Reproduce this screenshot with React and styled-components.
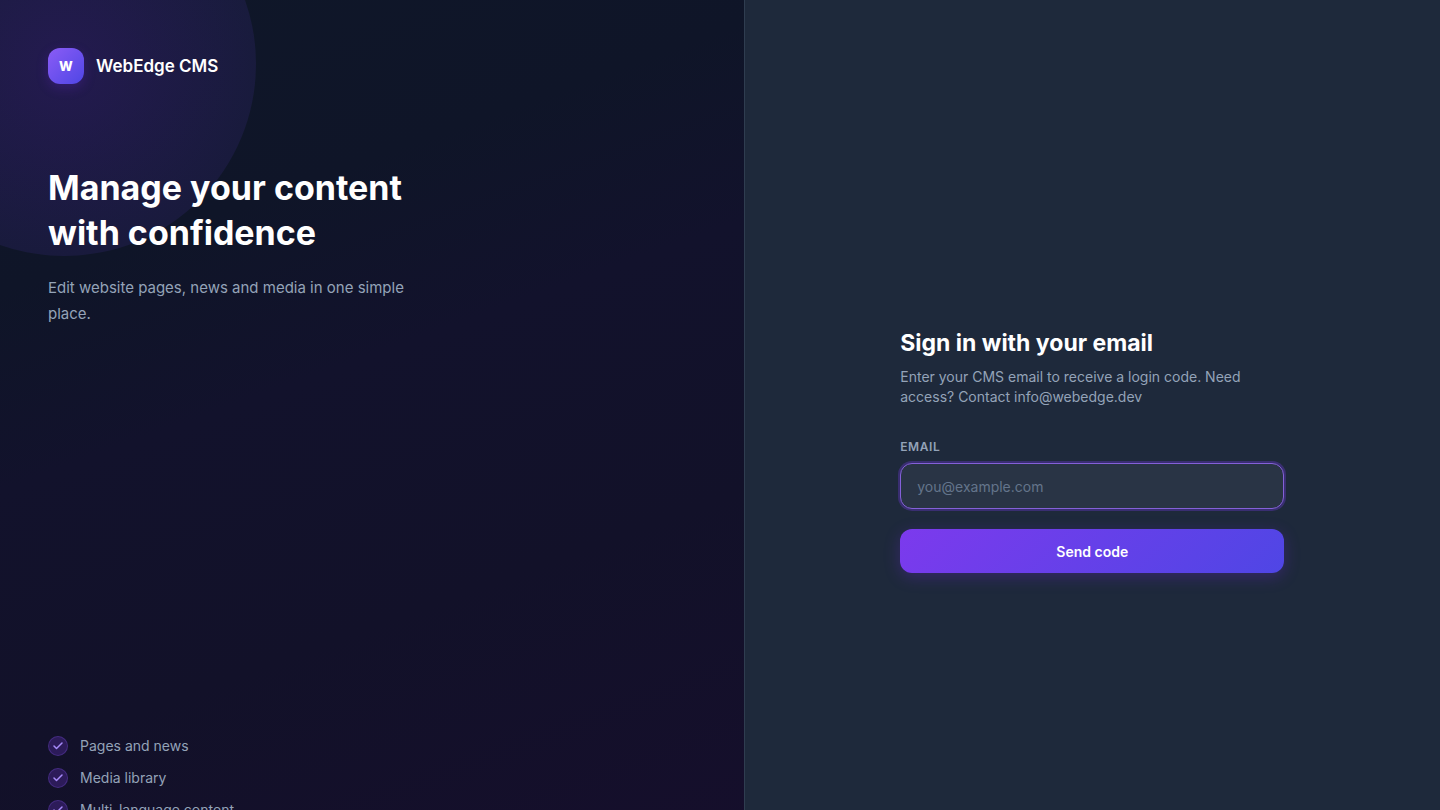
import React, { useState } from 'react';
import styled, { createGlobalStyle } from 'styled-components';
import { Check } from 'lucide-react';

const GlobalStyle = createGlobalStyle`
  *, *::before, *::after {
    box-sizing: border-box;
  }

  body {
    margin: 0;
    background: #0f172a;
    font-family: Inter, 'Liberation Sans', sans-serif;
    -webkit-font-smoothing: antialiased;
  }
`;

const Page = styled.div`
  display: flex;
  min-height: 900px;
  color: white;

  @media (max-width: 800px) {
    flex-direction: column;
  }
`;

const BrandPanel = styled.section`
  position: relative;
  flex: 1;
  display: flex;
  flex-direction: column;
  padding: 48px 48px 80px;
  overflow: hidden;
  background: linear-gradient(160deg, #0f1729 0%, #0f1528 25%, #12122c 42%, #121129 65%, #160e2c 100%);
`;

const Glow = styled.div`
  position: absolute;
  top: -128px;
  left: -128px;
  width: 384px;
  height: 384px;
  border-radius: 50%;
  background: radial-gradient(circle, rgba(109, 40, 217, 0.22) 0%, rgba(92, 60, 200, 0.13) 70%);
`;

const Brand = styled.header`
  position: relative;
  display: flex;
  align-items: center;
  gap: 12px;
`;

const Logo = styled.div`
  display: flex;
  align-items: center;
  justify-content: center;
  width: 36px;
  height: 36px;
  border-radius: 12px;
  background: linear-gradient(135deg, #8b5cf6, #4f46e5);
  box-shadow: 0 4px 12px rgba(109, 40, 217, 0.25);
  font-size: 13px;
  font-weight: 800;
`;

const BrandName = styled.span`
  font-size: 17px;
  font-weight: 600;
  line-height: 28px;
`;

const Intro = styled.div`
  position: relative;
  max-width: 384px;
  margin-top: 81px;
`;

const Headline = styled.h1`
  margin: 0;
  font-size: 34px;
  font-weight: 700;
  line-height: 45px;
`;

const Lead = styled.p`
  margin: 20px 0 0;
  color: #94a3b8;
  font-size: 15px;
  line-height: 26px;
`;

const FeatureList = styled.ul`
  display: flex;
  flex-direction: column;
  gap: 12px;
  margin: auto 0 0;
  padding: 0;
  list-style: none;
`;

const Feature = styled.li`
  display: flex;
  align-items: center;
  gap: 12px;
  color: #94a3b8;
  font-size: 14px;
  line-height: 20px;
`;

const FeatureIcon = styled.span`
  display: flex;
  align-items: center;
  justify-content: center;
  width: 20px;
  height: 20px;
  border: 1px solid rgba(139, 92, 246, 0.25);
  border-radius: 50%;
  background: rgba(124, 58, 237, 0.25);
  color: #a78bfa;
`;

const FormPanel = styled.main`
  flex: 1;
  display: flex;
  align-items: center;
  justify-content: center;
  padding: 48px 24px;
  border-left: 1px solid #2f3d50;
  background: #1e293b;
`;

const Form = styled.form`
  width: 100%;
  max-width: 384px;
`;

const FormTitle = styled.h2`
  margin: 0;
  font-size: 23px;
  font-weight: 700;
  line-height: 32px;
`;

const FormText = styled.p`
  margin: 8px 0 32px;
  color: #94a3b8;
  font-size: 14px;
  line-height: 20px;
`;

const Label = styled.label`
  display: block;
  margin-bottom: 8px;
  color: #94a3b8;
  font-size: 12px;
  font-weight: 600;
  line-height: 16px;
  letter-spacing: 0.05em;
  text-transform: uppercase;
`;

const Input = styled.input`
  display: block;
  width: 100%;
  height: 46px;
  padding: 0 16px;
  border: 1px solid #8460d8;
  border-radius: 12px;
  outline: none;
  background: #293445;
  box-shadow: 0 0 0 2px rgba(124, 58, 237, 0.3);
  color: white;
  font-family: inherit;
  font-size: 14px;

  &::placeholder {
    color: #64748b;
    opacity: 1;
  }
`;

const SubmitButton = styled.button`
  width: 100%;
  height: 44px;
  margin-top: 20px;
  border: none;
  border-radius: 12px;
  background: linear-gradient(135deg, #7c3aed, #4f46e5);
  box-shadow: 0 4px 16px rgba(109, 40, 217, 0.3);
  color: white;
  font-family: inherit;
  font-size: 14px;
  font-weight: 600;
  cursor: pointer;

  &:hover {
    filter: brightness(1.1);
  }
`;

const features = ['Pages and news', 'Media library', 'Multi-language content'];

function App() {
  const [email, setEmail] = useState('');

  const handleSubmit = (event) => {
    event.preventDefault();
  };

  return (
    <>
      <GlobalStyle />
      <Page>
        <BrandPanel>
          <Glow />
          <Brand>
            <Logo>W</Logo>
            <BrandName>WebEdge CMS</BrandName>
          </Brand>

          <Intro>
            <Headline>
              Manage your content
              <br />
              with confidence
            </Headline>
            <Lead>Edit website pages, news and media in one simple place.</Lead>
          </Intro>

          <FeatureList>
            {features.map((feature) => (
              <Feature key={feature}>
                <FeatureIcon>
                  <Check size={12} strokeWidth={3} />
                </FeatureIcon>
                {feature}
              </Feature>
            ))}
          </FeatureList>
        </BrandPanel>

        <FormPanel>
          <Form onSubmit={handleSubmit}>
            <FormTitle>Sign in with your email</FormTitle>
            <FormText>
              Enter your CMS email to receive a login code. Need access? Contact info@webedge.dev
            </FormText>
            <Label htmlFor="email">Email</Label>
            <Input
              id="email"
              type="email"
              placeholder="you@example.com"
              value={email}
              onChange={(event) => setEmail(event.target.value)}
            />
            <SubmitButton type="submit">Send code</SubmitButton>
          </Form>
        </FormPanel>
      </Page>
    </>
  );
}

export default App;
